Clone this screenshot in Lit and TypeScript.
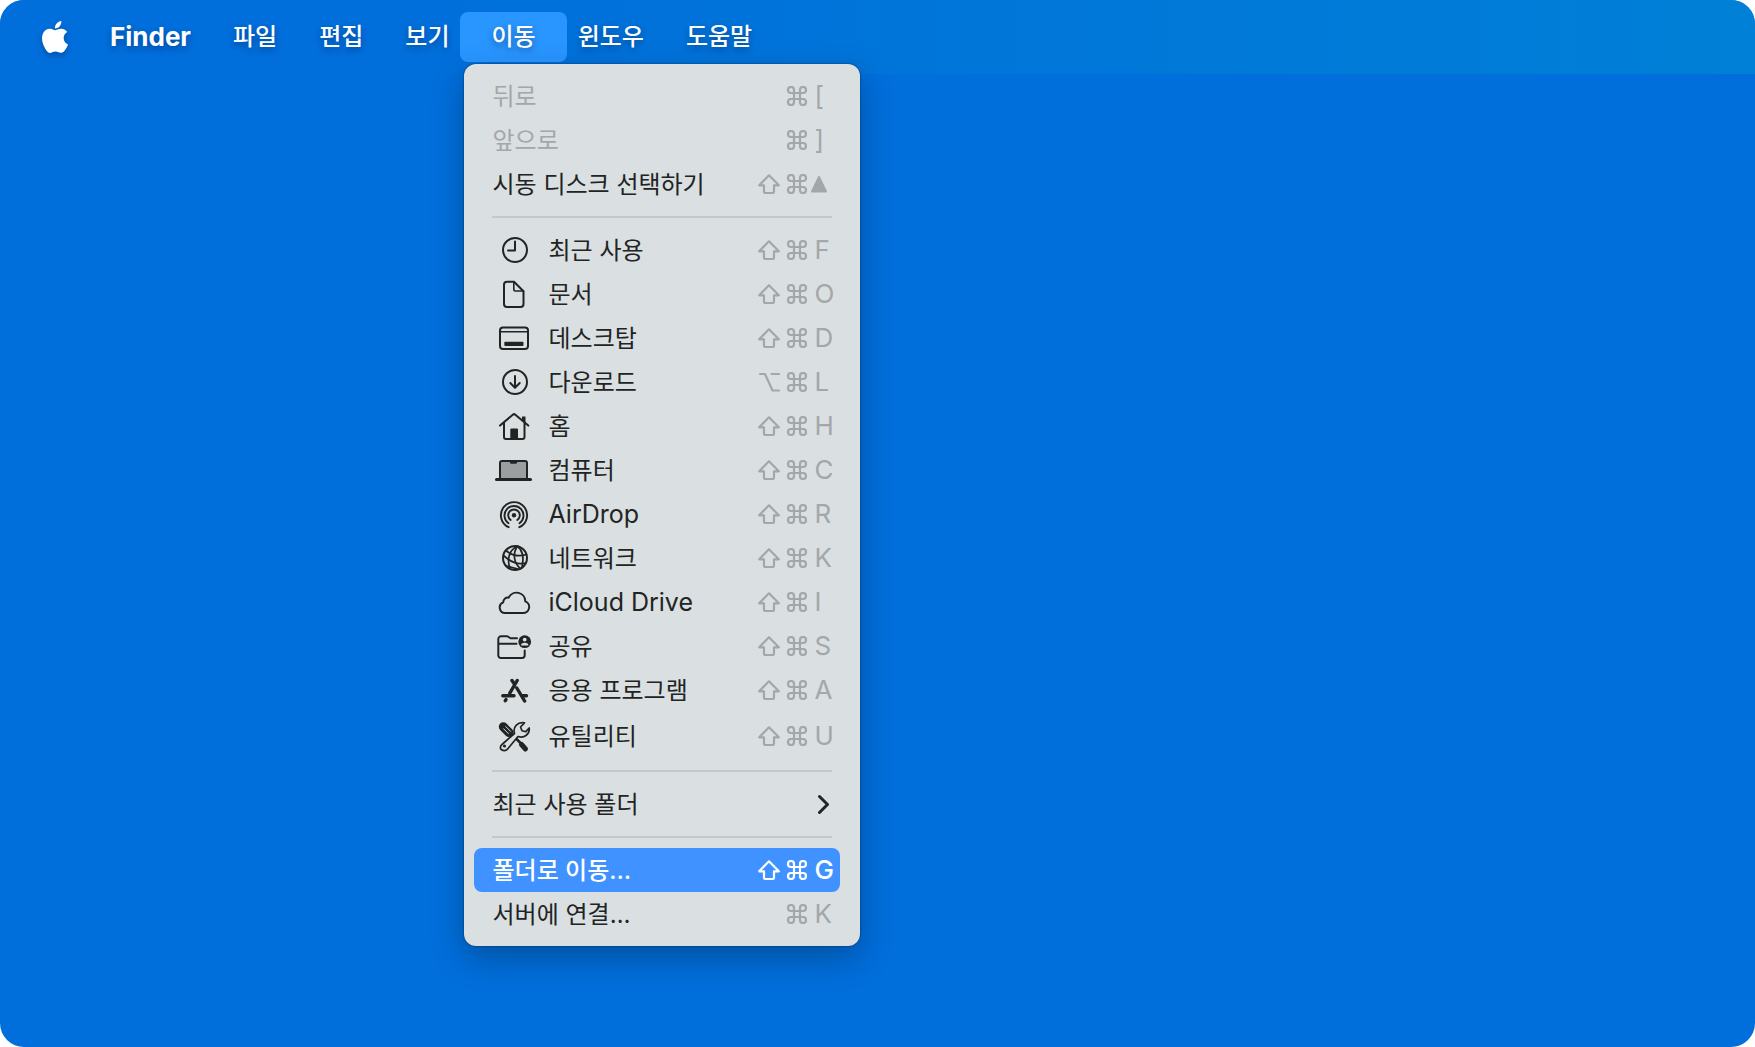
import { LitElement, html, svg, css, nothing, TemplateResult, SVGTemplateResult } from "lit";
import { customElement, property } from "lit/decorators.js";
import { classMap } from "lit/directives/class-map.js";

type Item = {
  label: string;
  icon?: string;
  mods?: string[];
  key?: string;
  disabled?: boolean;
  selected?: boolean;
  submenu?: boolean;
};

const ICONS: Record<string, SVGTemplateResult> = {
  clock: svg`<circle cx="23" cy="22" r="12"/><path d="M23 13.5V22.6H16"/>`,
  document: svg`<path d="M22 9.7H15a3 3 0 0 0-3 3V32a3 3 0 0 0 3 3H28.500a3 3 0 0 0 3-3V19.200Z"/><path d="M21.800 10V17.300a1.700 1.700 0 0 0 1.700 1.700H31.500" stroke-width="1.600"/>`,
  desktop: svg`<rect x="8" y="11.500" width="28" height="21.500" rx="3"/><path d="M8 15.800H36" stroke-width="1.600"/><rect class="solid" x="12.300" y="25.700" width="19.200" height="4.200" rx="1"/>`,
  download: svg`<circle cx="23" cy="22" r="12"/><path d="M23 16V27.500M18.300 23L23 27.700L27.700 23"/>`,
  home: svg`<path d="M8 21.600L20.800 10.700a1.900 1.900 0 0 1 2.500 0L36.300 21.600M12 19V33a2 2 0 0 0 2 2H30.500a2 2 0 0 0 2-2V19"/><path class="solid" d="M30 12.500h3.500v7l-3.500-3ZM18.300 25.500a1 1 0 0 1 1-1H25a1 1 0 0 1 1 1V35H18.300Z"/>`,
  computer: svg`<rect class="shade" x="8" y="13" width="27" height="18.500" rx="2"/><path class="solid" d="M18 13h7v1.500a1.200 1.200 0 0 1-1.200 1.200h-4.600a1.200 1.200 0 0 1-1.200-1.200Z"/><path d="M4.500 31.500H38.500" stroke-width="3"/>`,
  airdrop: svg`<g stroke-width="1.900"><circle class="solid" cx="22" cy="23.300" r="2.200"/><path d="M16.700 35.200A13.100 13.100 0 1 1 27.300 35.200"/><path d="M16.500 31.200A9.500 9.500 0 1 1 27.500 31.200"/><path d="M18.700 28A5.800 5.800 0 1 1 25.300 28"/></g>`,
  network: svg`<circle cx="23" cy="22" r="12"/><g stroke-width="1.700"><path d="M11.500 19.500C17 24.500 25 29.500 33.500 27"/><path d="M14 14.500C19 19 26 21 34.500 18.500"/><path d="M25.500 10.200C16.500 14 14.500 25 18.500 33"/><path d="M25.500 10.200C20.500 17 21.500 27 28.500 32.500"/><path d="M25.500 10.200C30.500 14 32 22 30 31"/><path d="M13.500 29.500C17 31 21 32 26 33"/></g>`,
  cloud: svg`<path d="M13.500 33H31a6 6 0 0 0 2.300-11.600A8.700 8.700 0 0 0 16.700 17.700A4.600 4.600 0 0 0 11.200 22.400A5.500 5.500 0 0 0 13.500 33Z"/>`,
  shared: svg`<path d="M25 14.300H18.500L16.200 12.700a2.500 2.500 0 0 0-1.400-.4H9a2.700 2.700 0 0 0-2.700 2.700V31.300a2.700 2.700 0 0 0 2.700 2.700H30a2.700 2.700 0 0 0 2.700-2.700V26.500M6.300 19.700H24.500"/><circle class="solid" cx="32.700" cy="17.700" r="6.400"/><circle class="hole" cx="32.700" cy="15.600" r="1.900"/><path class="hole" d="M29 21.500a3.700 2.800 0 0 1 7.400 0Z"/>`,
  apps: svg`<g stroke-width="3.400"><path d="M25.200 12.500L17.800 25.200M20 12.500L21.500 14.800M24.800 20L32.600 33"/><path d="M10.800 27.800H22M31 27.800H34.500M14 31.600L13.300 32.700"/></g>`,
  tools: svg`<path d="M11.300 14.800L17 20.500" stroke-width="9"/><path class="gap" d="M13.800 14.600L18.600 19.400M11.600 16.800L16.400 21.600" stroke-width="1"/><path d="M22 24.500L28.500 31" stroke-width="2.600"/><path d="M29.500 32.500L33.500 37" stroke-width="5"/><path class="paper" d="M10 32.500L22.500 21.500C20.500 14.500 26 9.500 32.500 10.800L28.500 15L30 18.700L33.800 19.700L37.200 16C38 22 32.500 26.500 26 24.500L16 36.500A4.600 4.600 0 0 1 8.800 37.200A4 4 0 0 1 10 32.500Z" stroke-width="1.700"/><circle class="solid" cx="12.500" cy="34" r="1.600"/>`,
};

const KEYS: Record<string, SVGTemplateResult> = {
  shift: svg`<path d="M11 1.300L20.800 11.300H16V17.500a1.500 1.500 0 0 1-1.500 1.500H7.500A1.500 1.500 0 0 1 6 17.500V11.300H1.200Z"/>`,
  option: svg`<path d="M2 2H7L14.500 18.500H21M13.500 2H21"/>`,
  command: svg`<path transform="translate(-1 -2)" d="M18 3a3 3 0 0 0-3 3v12a3 3 0 1 0 3-3H6a3 3 0 1 0 3 3V6a3 3 0 1 0-3 3h12a3 3 0 1 0 0-6"/>`,
};

const SC = ["shift", "command"];
const GROUPS: Item[][] = [
  [
    { label: "뒤로", mods: ["command"], key: "[", disabled: true },
    { label: "앞으로", mods: ["command"], key: "]", disabled: true },
    { label: "시동 디스크 선택하기", mods: SC, key: "up" },
  ],
  [
    { label: "최근 사용", icon: "clock", mods: SC, key: "F" },
    { label: "문서", icon: "document", mods: SC, key: "O" },
    { label: "데스크탑", icon: "desktop", mods: SC, key: "D" },
    { label: "다운로드", icon: "download", mods: ["option", "command"], key: "L" },
    { label: "홈", icon: "home", mods: SC, key: "H" },
    { label: "컴퓨터", icon: "computer", mods: SC, key: "C" },
    { label: "AirDrop", icon: "airdrop", mods: SC, key: "R" },
    { label: "네트워크", icon: "network", mods: SC, key: "K" },
    { label: "iCloud Drive", icon: "cloud", mods: SC, key: "I" },
    { label: "공유", icon: "shared", mods: SC, key: "S" },
    { label: "응용 프로그램", icon: "apps", mods: SC, key: "A" },
    { label: "유틸리티", icon: "tools", mods: SC, key: "U" },
  ],
  [{ label: "최근 사용 폴더", submenu: true }],
  [
    { label: "폴더로 이동…", mods: SC, key: "G", selected: true },
    { label: "서버에 연결…", mods: ["command"], key: "K" },
  ],
];

@customElement("menu-row")
export class MenuRow extends LitElement {
  @property({ attribute: false }) item!: Item;

  static styles = css`
    :host { display: block; }
    .row {
      box-sizing: border-box;
      display: flex;
      align-items: center;
      width: 100%;
      height: 44px;
      margin: 0;
      padding: 0 0 0 18px;
      border: 0;
      border-radius: 8px;
      background: none;
      color: #222423;
      font: 400 24px/36px Inter, "Noto Sans CJK KR", sans-serif;
      text-align: left;
      white-space: nowrap;
    }
    .tall { height: 48px; }
    .row:disabled { color: #a4a7a8; }
    .selected { background: #3f92ff; color: #fff; font-weight: 500; }
    .icon {
      width: 44px;
      height: 44px;
      margin-right: 12px;
      flex: none;
      fill: none;
      stroke: currentColor;
      stroke-width: 2;
      stroke-linecap: round;
      stroke-linejoin: round;
    }
    .icon .solid { fill: currentColor; stroke: none; }
    .icon .hole { fill: #dadfe1; stroke: none; }
    .icon .paper { fill: #dadfe1; }
    .icon .shade { fill: #9c9fa0; }
    .icon .gap { stroke: #dadfe1; }
    .label { flex: 1; padding-top: 2px; }
    .latin { padding-top: 0; font-size: 25px; }
    .keys { display: flex; align-items: center; color: #a4a7a8; }
    .selected .keys { color: #fff; }
    .mod {
      width: 22px;
      height: 20px;
      margin-right: 6px;
      fill: none;
      stroke: currentColor;
      stroke-width: 2.2;
      stroke-linecap: round;
      stroke-linejoin: round;
    }
    .key { width: 26px; font-size: 26px; line-height: 36px; }
    .arrow { width: 30px; height: 20px; margin-left: -4px; fill: currentColor; stroke: currentColor; stroke-width: 2; stroke-linejoin: round; }
    .chevron { width: 14px; height: 20px; margin-right: 10px; fill: none; stroke: currentColor; stroke-width: 3; stroke-linecap: round; stroke-linejoin: round; }
  `;

  private keys(): TemplateResult {
    const { mods = [], key } = this.item;
    return html`<span class="keys">
      ${mods.map((m) => html`<svg class="mod" viewBox="0 0 22 20" aria-hidden="true">${KEYS[m]}</svg>`)}
      ${key === "up"
        ? html`<svg class="arrow" viewBox="0 0 30 20" aria-hidden="true"><path d="M9 3L16 17.500H2Z"/></svg>`
        : html`<span class="key">${key}</span>`}
    </span>`;
  }

  render() {
    const it = this.item;
    return html`<button
      type="button"
      class=${classMap({ row: true, tall: it.icon === "tools", selected: !!it.selected })}
      ?disabled=${!!it.disabled}
    >
      ${it.icon ? html`<svg class="icon" viewBox=${it.icon === "tools" ? "0 2 44 44" : "0 0 44 44"} aria-hidden="true">${ICONS[it.icon]}</svg>` : nothing}
      <span class=${classMap({ label: true, latin: /^[A-Za-z]/.test(it.label) })}>${it.label}</span>
      ${it.submenu
        ? html`<svg class="chevron" viewBox="0 0 14 20" aria-hidden="true"><path d="M3.500 2.500L11.500 10.500L3.500 18.500"/></svg>`
        : this.keys()}
    </button>`;
  }
}

@customElement("app-root")
export class AppRoot extends LitElement {
  static styles = css`
    :host {
      display: block;
      font-family: Inter, "Noto Sans CJK KR", sans-serif;
    }
    .desktop {
      min-height: 100vh;
      border-radius: 24px;
      background: #006edb;
    }
    .bar {
      box-sizing: border-box;
      display: flex;
      align-items: center;
      height: 74px;
      padding: 0 21px;
      border-radius: 24px 24px 0 0;
      background: linear-gradient(90deg, #006edb 20%, #0080d7 100%);
    }
    .entry { position: relative; }
    .title {
      display: flex;
      align-items: center;
      height: 50px;
      margin: 0;
      padding: 0 21px;
      border: 0;
      border-radius: 8px;
      background: none;
      color: #fff;
      font: 500 24px/36px Inter, "Noto Sans CJK KR", sans-serif;
      text-shadow: 0 3px 6px rgba(0, 20, 60, 0.4);
      white-space: nowrap;
    }
    .app { font-size: 26px; font-weight: 700; }
    .open { padding: 0 31px; background: #2995ff; }
    .entry.active { margin: 0 -10px; }
    .apple { width: 26px; height: 32px; fill: #fff; filter: drop-shadow(0 3px 3px rgba(0, 20, 60, 0.3)); }
    .menu {
      position: absolute;
      z-index: 1;
      top: 52px;
      left: 4px;
      box-sizing: border-box;
      min-width: 396px;
      padding: 10px 20px 10px 10px;
      border-radius: 12px;
      background: #dadfe1;
      box-shadow: 0 0 2px rgba(0, 0, 0, 0.6), 0 12px 32px rgba(0, 0, 0, 0.26);
    }
    .rule {
      height: 2px;
      margin: 10px 8px 10px 18px;
      border: 0;
      background: #c3c8ca;
    }
  `;

  private menu(): TemplateResult {
    return html`<div class="menu">
      ${GROUPS.map(
        (g, i) => html`${i ? html`<hr class="rule" />` : nothing}${g.map((it) => html`<menu-row .item=${it}></menu-row>`)}`
      )}
    </div>`;
  }

  render() {
    return html`<main class="desktop">
      <nav class="bar">
        <div class="entry">
          <button type="button" class="title" aria-label="Apple">
            <svg class="apple" viewBox="2.200 0 19.600 24" aria-hidden="true">
              <path d="M12.152 6.896c-.948 0-2.415-1.078-3.96-1.04-2.04.027-3.91 1.183-4.961 3.014-2.117 3.675-.546 9.103 1.519 12.09 1.013 1.454 2.208 3.09 3.792 3.039 1.52-.065 2.09-.987 3.935-.987 1.831 0 2.35.987 3.96.948 1.637-.026 2.676-1.48 3.676-2.948 1.156-1.688 1.636-3.325 1.662-3.415-.039-.013-3.182-1.221-3.22-4.857-.026-3.04 2.48-4.494 2.597-4.559-1.429-2.09-3.623-2.324-4.39-2.376-2-.156-3.675 1.09-4.61 1.09zM15.53 3.83c.843-1.012 1.4-2.427 1.245-3.83-1.207.052-2.662.805-3.532 1.818-.78.896-1.454 2.338-1.273 3.714 1.338.104 2.715-.688 3.559-1.701" />
            </svg>
          </button>
        </div>
        <div class="entry"><button type="button" class="title app">Finder</button></div>
        ${["파일", "편집", "보기", "이동", "윈도우", "도움말"].map((t) => {
          const open = t === "이동";
          return html`<div class=${classMap({ entry: true, active: open })}>
            <button type="button" class=${classMap({ title: true, open })} aria-expanded=${open ? "true" : "false"}>${t}</button>
            ${open ? this.menu() : nothing}
          </div>`;
        })}
      </nav>
    </main>`;
  }
}
